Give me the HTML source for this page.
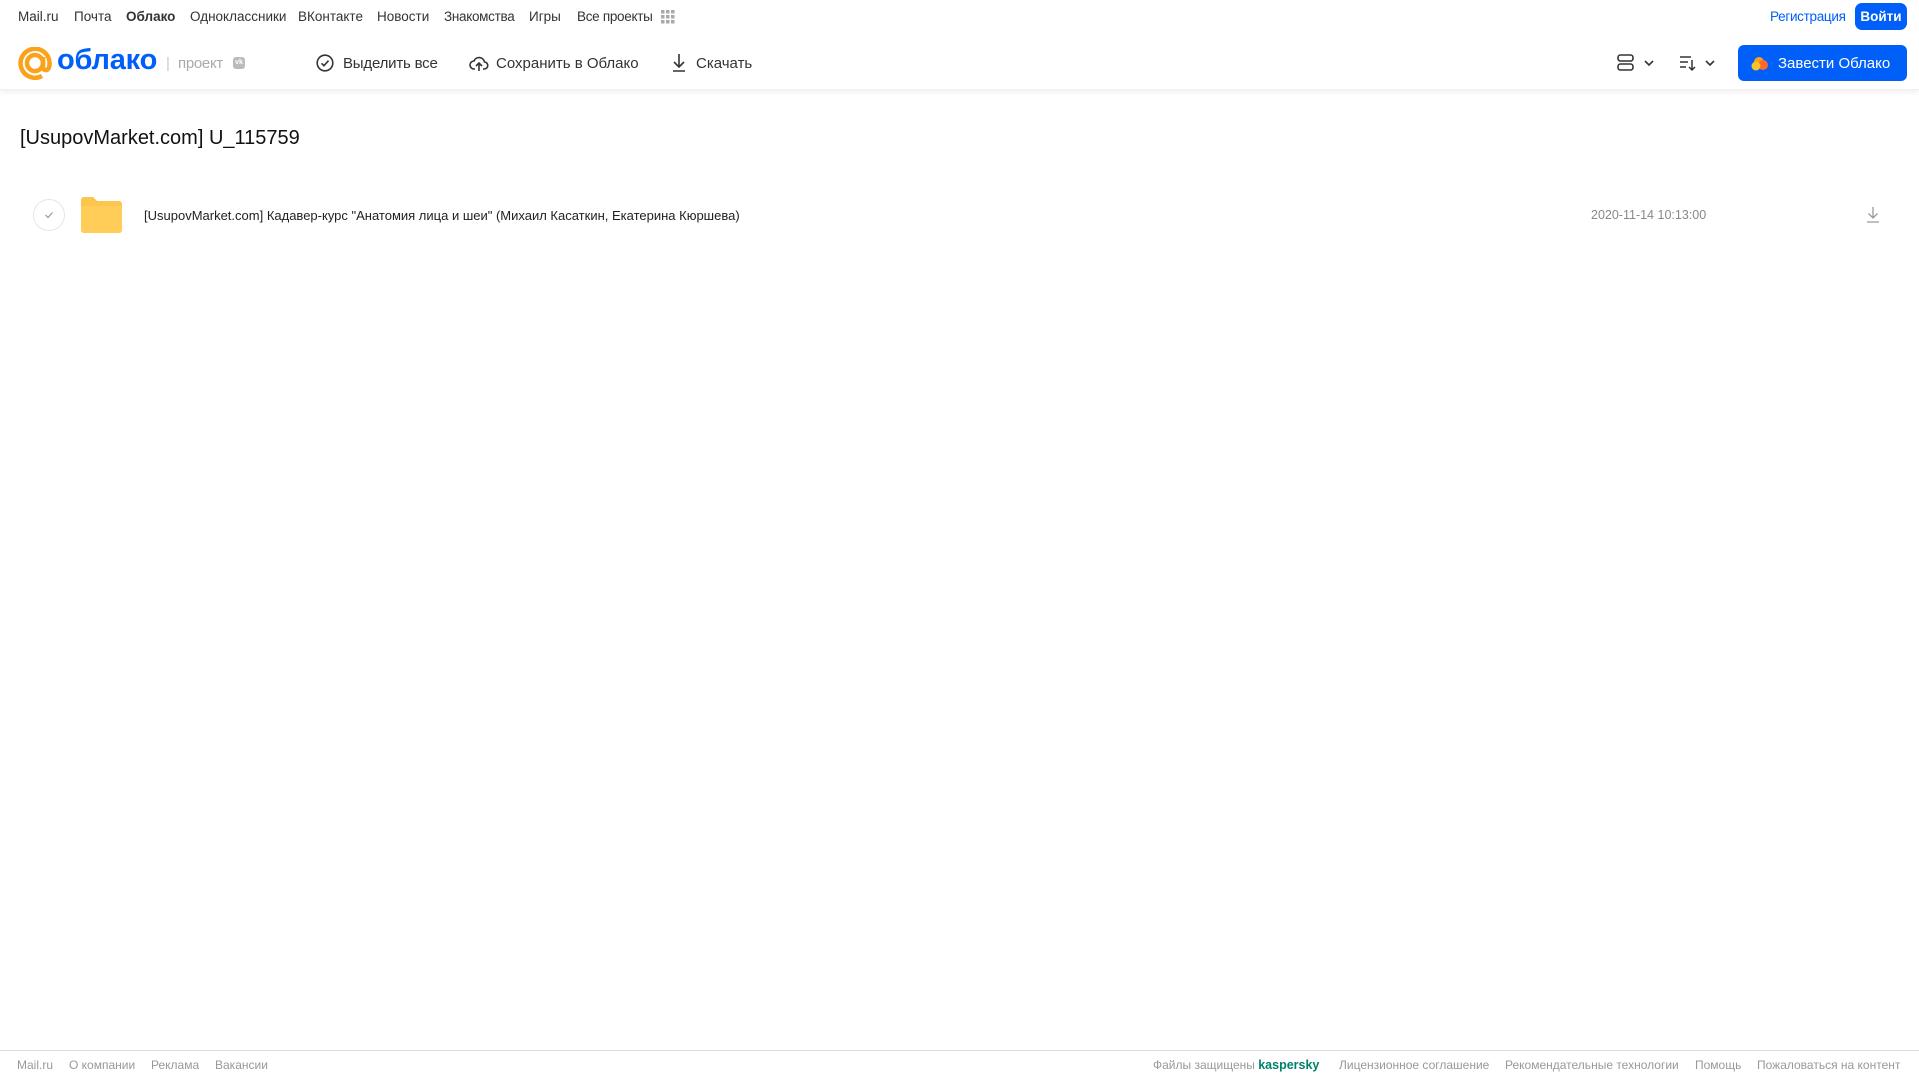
<!DOCTYPE html>
<html><head><meta charset="utf-8"><style>
*{margin:0;padding:0;box-sizing:border-box}
body{width:1919px;height:1079px;position:relative;background:#fff;font-family:"Liberation Sans",Arial,sans-serif;overflow:hidden;color:#333}
.a{position:absolute;white-space:nowrap}
.nav{top:9px;font-size:13.5px;color:#333}
.tb{top:55px;font-size:15px;color:#333}
.ft{top:1058px;font-size:12px;color:#999}
</style></head><body>
<div class="a nav" style="left:18px">Mail.ru</div>
<div class="a nav" style="left:74px">Почта</div>
<div class="a nav" style="left:126px;font-weight:bold">Облако</div>
<div class="a nav" style="left:190px">Одноклассники</div>
<div class="a nav" style="left:298px">ВКонтакте</div>
<div class="a nav" style="left:377px">Новости</div>
<div class="a nav" style="left:444px;letter-spacing:-0.3px">Знакомства</div>
<div class="a nav" style="left:529px">Игры</div>
<div class="a nav" style="left:577px;letter-spacing:-0.3px">Все проекты</div>
<svg class="a" style="left:661px;top:10px" width="14" height="14"><g fill="#aaa"><rect x="0" y="0" width="3.5" height="3.5"/><rect x="5" y="0" width="3.5" height="3.5"/><rect x="10" y="0" width="3.5" height="3.5"/><rect x="0" y="5" width="3.5" height="3.5"/><rect x="5" y="5" width="3.5" height="3.5"/><rect x="10" y="5" width="3.5" height="3.5"/><rect x="0" y="10" width="3.5" height="3.5"/><rect x="5" y="10" width="3.5" height="3.5"/><rect x="10" y="10" width="3.5" height="3.5"/></g></svg>
<div class="a nav" style="left:1770px;color:#005ff9;letter-spacing:-0.3px">Регистрация</div>
<div class="a" style="left:1855px;top:3px;width:52px;height:27px;background:#005ff9;border-radius:7px;color:#fff;font-size:13.5px;font-weight:bold;text-align:center;line-height:27px">Войти</div>

<div class="a" style="left:0;top:36px;width:1919px;height:54px;box-shadow:0 3px 5px rgba(0,0,0,.05);border-bottom:1px solid #f0f0f0"></div>
<svg class="a" style="left:18px;top:47px" width="34" height="33" viewBox="0 0 34 33"><circle cx="17" cy="16" r="8" fill="none" stroke="#f9a21a" stroke-width="4.5"/><path d="M25 10 V19 Q25 24 29 23 Q32 21 31.5 15 A14.5 14.5 0 1 0 24 29" fill="none" stroke="#f9a21a" stroke-width="4.5"/></svg>
<div class="a" style="left:57px;top:44px;font-size:29px;font-weight:bold;color:#005ff9;letter-spacing:-0.2px">облако</div>
<div class="a" style="left:166px;top:55px;font-size:15px;color:#ccc">|</div>
<div class="a" style="left:178px;top:55px;font-size:15px;color:#aaa;letter-spacing:-0.3px">проект</div>
<div class="a" style="left:233px;top:57px;width:12px;height:12px;background:#bbb;border-radius:3px;color:#fff;font-size:7px;font-weight:bold;text-align:center;line-height:12px">vk</div>

<svg class="a" style="left:316px;top:54px" width="18" height="18"><circle cx="9" cy="9" r="7.8" fill="none" stroke="#333" stroke-width="1.6"/><path d="M5.5 9.3l2.4 2.4 4.6-5" fill="none" stroke="#333" stroke-width="1.6"/></svg>
<div class="a tb" style="left:343px;letter-spacing:-0.2px">Выделить все</div>
<svg class="a" style="left:469px;top:54px" width="20" height="18"><path d="M6 15H5A4 4 0 0 1 5 7a5.5 5.5 0 0 1 10.5 1A3.5 3.5 0 0 1 15 15h-1" fill="none" stroke="#333" stroke-width="1.6"/><path d="M10 17V9M7 12l3-3 3 3" fill="none" stroke="#333" stroke-width="1.6"/></svg>
<div class="a tb" style="left:496px">Сохранить в Облако</div>
<svg class="a" style="left:671px;top:53px" width="16" height="20"><path d="M8 1v13M3 9l5 5 5-5M2 18h12" fill="none" stroke="#333" stroke-width="1.6"/></svg>
<div class="a tb" style="left:696px">Скачать</div>

<svg class="a" style="left:1617px;top:53px" width="50" height="20"><rect x="1" y="2" width="15" height="6" rx="2.5" fill="none" stroke="#333" stroke-width="1.6"/><rect x="1" y="11" width="15" height="6" rx="2.5" fill="none" stroke="#333" stroke-width="1.6"/><path d="M28 8l4 4 4-4" fill="none" stroke="#333" stroke-width="1.6"/></svg>
<svg class="a" style="left:1678px;top:53px" width="50" height="20"><path d="M2 4h11M2 9h8M2 14h6M14 7v10M11 14l3 3 3-3" fill="none" stroke="#333" stroke-width="1.5"/><path d="M28 8l4 4 4-4" fill="none" stroke="#333" stroke-width="1.6"/></svg>
<div class="a" style="left:1738px;top:45px;width:169px;height:36px;background:#005ff9;border-radius:6px"></div>
<svg class="a" style="left:1750px;top:54px" width="20" height="18"><circle cx="9" cy="8" r="5" fill="#f9a21a"/><circle cx="13" cy="11" r="5" fill="#ff6a2b"/><circle cx="6" cy="12" r="4.5" fill="#f9c22a"/></svg>
<div class="a" style="left:1778px;top:55px;font-size:15px;color:#fff">Завести Облако</div>

<div class="a" style="left:20px;top:127px;font-size:20px;color:#111">[UsupovMarket.com] U_115759</div>

<div class="a" style="left:33px;top:199px;width:32px;height:32px;border:1px solid #e6e6e6;border-radius:50%"></div>
<svg class="a" style="left:44px;top:210px" width="10" height="10"><path d="M1.5 5l2.5 2.5 4.5-5" fill="none" stroke="#999" stroke-width="1.2"/></svg>
<svg class="a" style="left:81px;top:197px" width="41" height="36"><path d="M0 3a3 3 0 0 1 3-3h9l4 4h22a3 3 0 0 1 3 3v26a3 3 0 0 1-3 3H3a3 3 0 0 1-3-3z" fill="#fcc54d"/><path d="M0 9h41v24a3 3 0 0 1-3 3H3a3 3 0 0 1-3-3z" fill="#ffcd58"/></svg>
<div class="a" style="left:144px;top:208px;font-size:13px;color:#222">[UsupovMarket.com] Кадавер-курс "Анатомия лица и шеи" (Михаил Касаткин, Екатерина Кюршева)</div>
<div class="a" style="left:1591px;top:208px;font-size:12.5px;color:#888">2020-11-14 10:13:00</div>
<svg class="a" style="left:1866px;top:206px" width="14" height="18"><path d="M7 1v11M2.5 7.5L7 12l4.5-4.5M1 16h12" fill="none" stroke="#999" stroke-width="1.3"/></svg>

<div class="a" style="left:0;top:1050px;width:1919px;height:1px;background:#ddd"></div>
<div class="a ft" style="left:17px">Mail.ru</div>
<div class="a ft" style="left:69px">О компании</div>
<div class="a ft" style="left:151px">Реклама</div>
<div class="a ft" style="left:215px">Вакансии</div>
<div class="a ft" style="left:1153px">Файлы защищены <b style="color:#00806a;font-size:12.5px">kaspersky</b></div>
<div class="a ft" style="left:1339px">Лицензионное соглашение</div>
<div class="a ft" style="left:1505px">Рекомендательные технологии</div>
<div class="a ft" style="left:1695px">Помощь</div>
<div class="a ft" style="left:1757px">Пожаловаться на контент</div>
</body></html>
